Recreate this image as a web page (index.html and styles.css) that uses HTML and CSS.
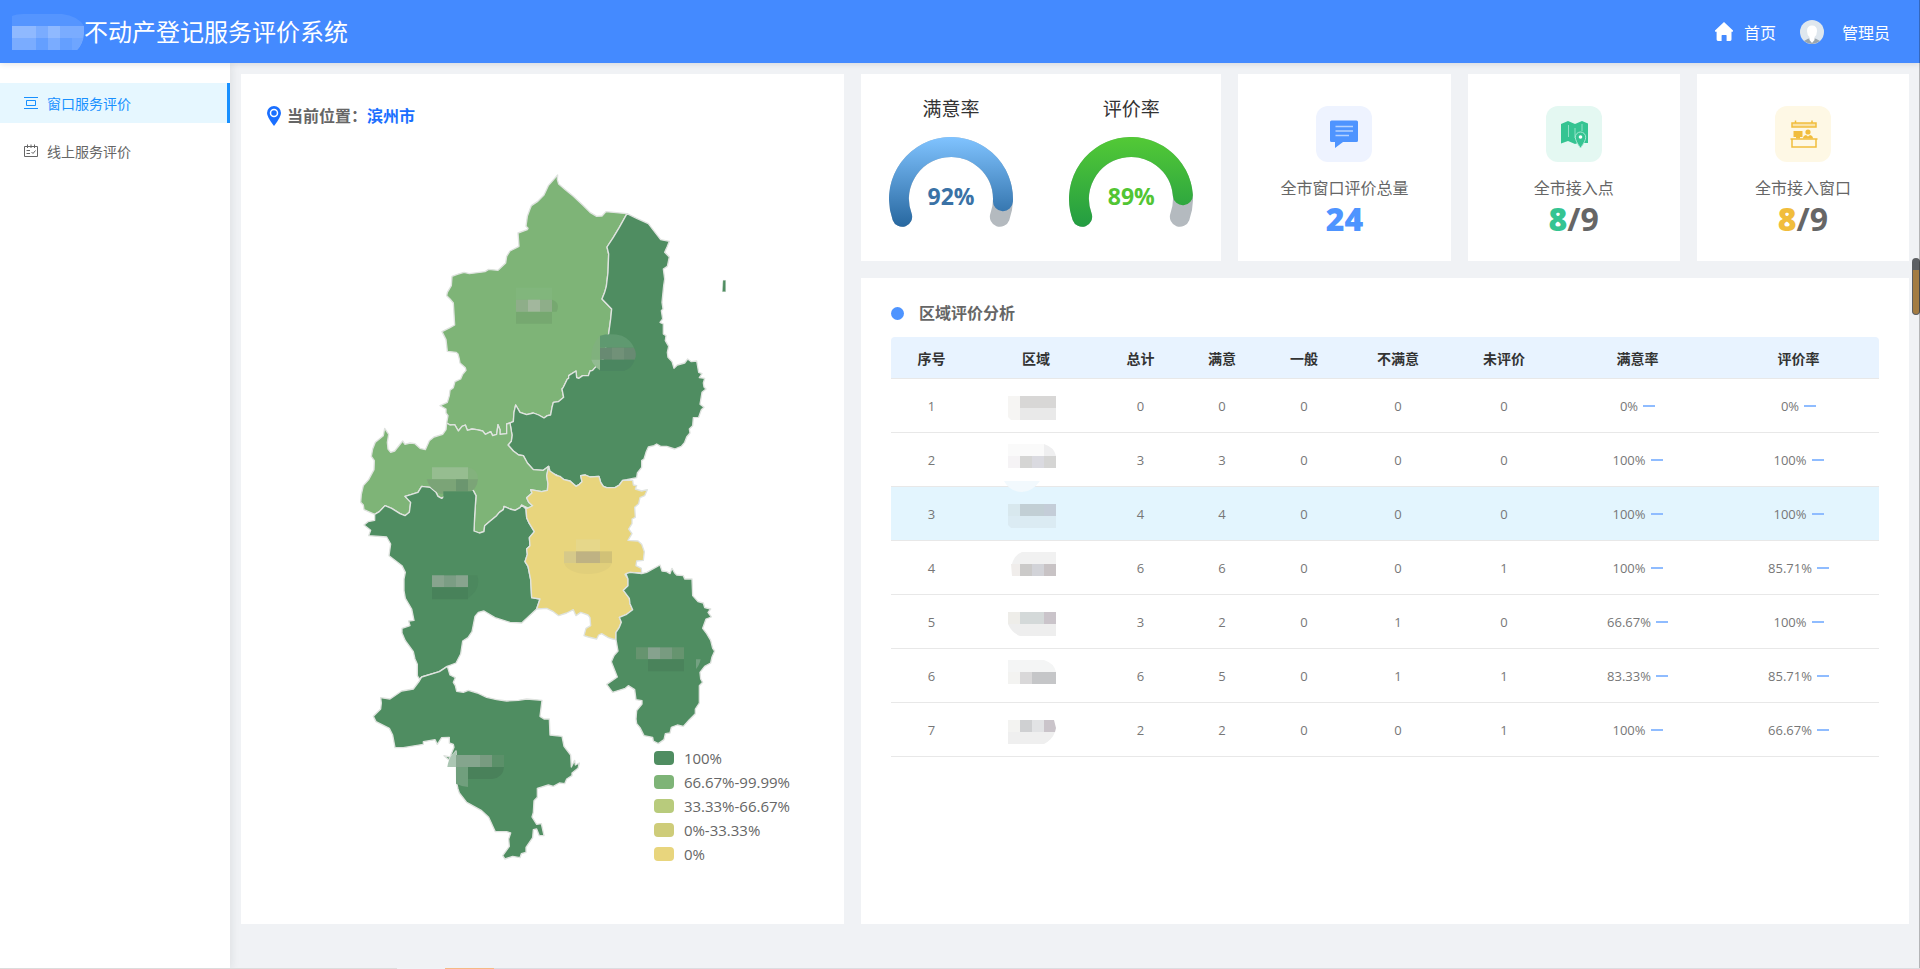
FILE: index.html
```html
<!DOCTYPE html>
<html lang="zh-CN">
<head>
	<meta charset="utf-8">
	<title>不动产登记服务评价系统</title>
	<link rel="stylesheet" href="styles.css">
</head>
<body>
	<header class="header">
		<div class="brand">
			<svg class="brand-mask" width="72" height="36" viewBox="0 0 72 36">
				<path d="M0 2Q4 0 12 0H50Q66 2 72 12H0Z" fill="#5595ff"/>
				<path d="M0 12H72V20Q71 30 65 36H0Z" fill="#7aacff"/>
				<path d="M0 12H24V24H0ZM36 12H48V24H36Z" fill="#8fb9ff"/>
				<path d="M24 24H36V36H24ZM48 24H60V36H48Z" fill="#649fff"/>
				<path d="M60 24H71Q69 32 65 36H60Z" fill="#6ea5ff"/>
			</svg>
			<h1>不动产登记服务评价系统</h1>
		</div>
		<nav class="user">
			<a href="#" class="home">
				<svg width="18" height="19" viewBox="0 0 18 19"><path d="M9 0L18 8.4Q18.3 9.6 17 9.8H16.5V17.6Q16.5 19 15.2 19H11.6V13.6Q11.6 13 11 13H7.2Q6.6 13 6.6 13.6V19H3Q1.6 19 1.6 17.6V9.8H1Q-.3 9.6 0 8.4Z" fill="#fff"/></svg>
				首页
			</a>
			<a href="#" class="admin">
				<svg width="24" height="24" viewBox="0 0 24 24">
					<circle cx="12" cy="12" r="12" fill="#dfe7ee"/>
					<path d="M4 21Q8 18 12 18Q16 18 20 21Q16 24 12 24Q8 24 4 21Z" fill="#9aa5ad"/>
					<path d="M12 5.5Q17 5.500 17 11Q17 15 14.500 17V20L12 23L9.500 20V17Q7 15 7 11Q7 5.500 12 5.500Z" fill="#fff"/>
				</svg>
				管理员
			</a>
		</nav>
	</header>
	<div class="body">
		<aside class="side">
			<ul>
				<li class="active"><a href="#">
					<svg width="14" height="14" viewBox="0 0 14 14" fill="none" stroke="currentColor"><path d="M0 1.500H14M0 12.500H14M2.500 4.500H11.500V9.500H2.500Z"/></svg>
					窗口服务评价</a></li>
				<li><a href="#">
					<svg width="14" height="14" viewBox="0 0 14 14" fill="none" stroke="currentColor"><path d="M.5 2.500H13.500V12.500H.5ZM3.500 .5V4M7 .5V4M10.500 .5V4M2.500 6.500H6M2.500 9.500H6M7.500 8L9 9.500L11.500 6.500"/></svg>
					线上服务评价</a></li>
			</ul>
		</aside>
		<main class="main">
			<section class="card map-card">
				<div class="place">
					<svg width="14" height="20" viewBox="0 0 14 20"><path d="M7 0A7 7 0 0 1 14 7Q14 11 7 20Q0 11 0 7A7 7 0 0 1 7 0Z" fill="#1a6fff"/><circle cx="7" cy="7" r="3.500" fill="none" stroke="#fff" stroke-width="1.500"/></svg>
					<span>当前位置：</span>
					<a href="#">滨州市</a>
				</div>
				<svg class="map" viewBox="9 0 1200 2130">
					<g stroke="#dfe3df" stroke-width="4" stroke-linejoin="round">
						<path fill="#7eb477" d="M653 48L652 62L656 75L676 92L700 112L728 138L750 160L770 172L786 171L798 158L861 164L838 205L820 235L801 264L806 285L804 340L799 382L794 400L786 420L815 450L812 480L806 524L790 600L765 626L758 634L750 636L745 650L728 650L716 658L710 656L708 636L696 644L686 650L686 658L682 660L670 685L666 690L671 715L655 728L640 730L636 745L632 768L622 770L612 777L596 768L580 762L560 767L540 760L527 738L522 760L520 788L500 795L500 824L480 826L480 812L474 797L470 826L458 830L452 818L436 826L428 816L410 812L396 810L382 814L376 798L366 802L355 816L344 797L330 798L320 792L324 770L318 762L318 750L300 740L322 730L328 710L330 694L340 686L345 668L362 660L368 646L378 634L376 626L360 612L358 600L354 585L348 580L322 577L318 542L306 518L330 506L344 498L340 432L330 420L320 410L322 400L334 380L336 352L352 346L372 340L388 344L435 338L446 331L474 334L497 312L500 292L510 276L537 262L534 222L562 212L564 208L558 202L562 172L570 150L574 140L592 128L612 108L625 80Z"/>
						<path fill="#4f8d61" d="M861 164L890 178L925 194L962 242L988 247L982 262L974 280L988 294L982 322L970 330L974 360L971 380L966 430L969 450L964 455L968 480L960 490L970 495L970 525L978 530L976 545L986 562L982 580L984 595L996 608L1002 628L1012 618L1034 612L1043 600L1054 608L1070 606L1076 640L1086 644L1078 656L1094 658L1090 672L1092 684L1098 690L1086 700L1080 736L1092 745L1084 752L1076 775L1060 776L1058 800L1048 810L1050 822L1040 834L1034 850L1024 862L1004 870L980 862L962 862L950 855L942 860L925 864L918 880L912 900L905 905L905 925L892 942L890 956L860 962L848 964L838 978L825 986L800 986L790 982L782 970L777 952L750 954L736 948L722 950L726 968L718 976L708 982L690 966L672 962L650 948L626 942L626 922L610 934L580 932L562 912L550 890L536 888L520 876L504 858L514 846L516 828L510 792L520 788L522 760L527 738L540 760L560 767L580 762L596 768L612 777L622 770L632 768L636 745L640 730L655 728L671 715L666 690L670 685L682 660L686 658L686 650L708 636L710 656L716 658L728 650L745 650L750 636L758 634L765 626L790 600L806 524L812 480L815 450L786 420L794 400L799 382L804 340L806 285L801 264L820 235L838 205Z"/>
						<path fill="#7eb477" d="M134 808L146 826L142 850L144 870L152 880L164 876L188 846L195 856L210 852L225 854L240 868L256 872L268 845L282 834L308 826L318 812L320 792L330 798L344 797L355 816L366 802L376 798L382 814L396 810L410 812L428 816L436 826L452 818L458 830L470 826L474 797L480 812L480 826L500 824L500 795L510 792L516 828L514 846L504 858L520 876L536 888L550 890L562 912L580 932L610 934L626 922L620 950L624 975L622 994L605 998L572 992L576 1002L560 1016L566 1030L578 1040L566 1048L545 1038L540 1046L525 1054L510 1050L492 1042L490 1052L478 1060L470 1070L448 1088L434 1100L432 1118L418 1122L402 1116L404 1070L408 1010L400 995L390 990L330 1002L305 1018L294 1012L288 1000L270 985L245 982L234 1000L215 1006L195 1012L212 1030L208 1060L195 1070L180 1064L155 1048L135 1040L118 1058L104 1066L72 1052L70 1038L62 1030L64 1006L70 980L86 962L102 932L103 905L94 892L98 870L106 850L130 830Z"/>
						<path fill="#4f8d61" d="M104 1066L118 1058L135 1040L155 1048L180 1064L195 1070L208 1060L212 1030L195 1012L215 1006L234 1000L245 982L270 985L288 1000L294 1012L305 1018L330 1002L390 990L400 995L408 1010L404 1070L402 1116L418 1122L432 1118L434 1100L448 1088L470 1070L478 1060L490 1052L492 1042L510 1050L525 1054L540 1046L545 1038L558 1050L560 1076L566 1090L583 1118L568 1136L570 1160L560 1170L562 1186L555 1208L564 1222L572 1262L575 1316L600 1320L590 1350L545 1392L510 1390L465 1376L432 1356L415 1360L405 1372L396 1418L384 1436L368 1446L362 1485L348 1512L322 1522L298 1538L245 1554L238 1560L232 1550L232 1516L225 1500L220 1478L196 1445L186 1422L186 1408L210 1400L206 1386L222 1384L215 1350L196 1318L192 1295L192 1260L196 1240L186 1220L147 1190L152 1155L140 1134L86 1130L92 1114L72 1098L84 1088L104 1084Z"/>
						<path fill="#e8d57d" d="M626 922L630 936L650 950L660 952L672 962L690 966L708 982L718 976L726 968L722 950L736 948L750 954L777 952L782 970L790 982L800 986L825 986L838 978L848 964L878 964L880 978L890 980L886 990L905 996L922 992L914 1010L900 1016L896 1034L884 1045L886 1075L876 1080L876 1094L866 1110L876 1124L864 1144L894 1146L905 1156L913 1178L910 1204L890 1206L888 1220L904 1228L905 1242L870 1240L855 1246L864 1260L864 1280L850 1294L868 1318L870 1334L878 1352L860 1366L838 1375L844 1390L838 1405L828 1420L828 1442L818 1440L805 1436L785 1424L776 1428L770 1440L745 1434L732 1430L738 1408L752 1400L750 1376L744 1368L722 1360L708 1370L700 1352L680 1362L656 1370L640 1358L620 1348L590 1350L600 1320L575 1316L572 1262L564 1222L555 1208L562 1186L560 1170L570 1160L568 1136L583 1118L566 1090L560 1076L558 1050L578 1040L566 1030L560 1016L576 1002L572 992L605 998L622 994L624 975L620 950Z"/>
						<path fill="#4f8d61" d="M905 1244L920 1240L960 1218L966 1236L980 1238L990 1244L996 1228L1004 1242L1010 1248L1030 1250L1034 1260L1056 1260L1058 1310L1074 1328L1090 1332L1094 1346L1112 1350L1104 1360L1114 1374L1098 1380L1088 1408L1100 1424L1112 1444L1118 1468L1124 1476L1116 1494L1112 1512L1094 1522L1080 1540L1082 1560L1088 1570L1078 1580L1078 1632L1066 1650L1066 1664L1048 1682L1030 1702L1012 1698L994 1705L990 1722L976 1724L972 1742L955 1754L940 1746L938 1735L912 1730L900 1706L890 1694L888 1680L890 1655L906 1635L906 1625L888 1622L884 1592L865 1580L856 1588L818 1600L800 1576L832 1554L814 1508L822 1490L834 1476L828 1442L828 1420L838 1405L844 1390L838 1375L860 1366L878 1352L870 1334L868 1318L850 1294L864 1280L864 1260L858 1244L870 1240Z"/>
						<path fill="#4f8d61" d="M322 1522L330 1548L346 1556L340 1570L346 1580L350 1597L370 1600L385 1594L412 1602L440 1615L470 1622L500 1626L535 1624L560 1620L606 1624L600 1672L612 1680L628 1680L630 1728L666 1732L672 1762L692 1788L694 1824L704 1804L706 1818L718 1812L714 1828L696 1842L696 1850L680 1860L674 1874L658 1872L640 1882L625 1878L592 1888L592 1915L582 1925L580 1960L576 1974L590 1996L604 1994L612 2030L598 2030L590 2010L580 2012L578 2036L558 2065L558 2080L544 2084L540 2096L518 2092L495 2100L488 2090L508 2062L506 2040L512 2022L500 2018L466 2018L446 1975L425 1955L380 1930L358 1902L354 1890L350 1872L348 1776L326 1802L312 1790L330 1794L342 1765L340 1756L328 1752L328 1735L305 1736L292 1756L285 1742L250 1748L250 1756L190 1766L165 1766L158 1728L148 1708L108 1688L100 1672L122 1650L124 1632L122 1616L150 1620L185 1596L220 1590L238 1566L245 1554L298 1538Z"/>
						<path fill="#4f8d61" d="M1149 364H1157V398H1147Z" stroke-width="1"/>
					</g>
					<!-- 各区县名称遮罩 -->
					<path fill="#81b67c" d="M528 386H636V422H528Z"/>
					<path fill="#76a870" d="M528 458H636V494H528ZM636 422Q662 430 650 458H636Z"/>
					<path fill="#8eae89" d="M528 422H564V458H528ZM600 422H636V458H600Z"/>
					<path fill="#a2b79d" d="M564 422H600V458H564Z"/>
					<path fill="#80b17d" d="M780 530V602H754Q750 560 780 530Z"/>
					<path fill="#92bb92" d="M754 602H780V634Q760 620 754 602Z"/>
					<path fill="#5f9970" d="M780 530Q810 522 846 530Q872 542 882 566H780Z"/>
					<path fill="#688a72" d="M780 566H882Q892 584 884 602H780Z"/>
					<path fill="#719178" d="M816 566H852V602H816Z"/>
					<path fill="#4b8660" d="M780 602H884Q878 626 852 636H780Z"/>
					<path fill="#96bd90" d="M276 925H384V961H276Z"/>
					<path fill="#83b27d" d="M384 925Q414 930 414 961H384Z"/>
					<path fill="#7ba477" d="M260 961H414Q412 990 384 1004H300Q268 990 260 961Z"/>
					<path fill="#6b966f" d="M348 961H384V997H348Z"/>
					<path fill="#4f8d61" d="M310 997H398V1020H310Z"/>
					<path fill="#88a48e" d="M276 1249H312V1285H276ZM348 1249H384V1285H348Z"/>
					<path fill="#7b9d84" d="M312 1249H348V1285H312Z"/>
					<path fill="#48825a" d="M276 1285H384V1321H276Z"/>
					<path fill="#4c885e" d="M384 1249H412Q424 1290 384 1318Z"/>
					<path fill="#e6d78a" d="M708 1141H780V1177H708Z"/>
					<path fill="#d6c989" d="M672 1177H708V1213H672Z"/>
					<path fill="#bfb283" d="M708 1177H780V1213H708Z"/>
					<path fill="#d1c177" d="M780 1177H816V1213H780Z"/>
					<path fill="#e1cf7b" d="M672 1213H816Q802 1244 744 1245Q686 1244 672 1213Z"/>
					<path fill="#66946f" d="M888 1465H924V1501H888ZM996 1465H1032V1501H996Z"/>
					<path fill="#86a28e" d="M924 1465H960V1501H924Z"/>
					<path fill="#789b80" d="M960 1465H996V1501H960Z"/>
					<path fill="#4a835b" d="M924 1501H1032V1537H924Z"/>
					<path fill="#73a181" d="M1068 1501H1082Q1078 1520 1068 1530Z"/>
					<path fill="#abc6b3" d="M348 1776V1824H322Q326 1792 348 1776Z"/>
					<path fill="#84a58d" d="M348 1788H420V1824H348Z"/>
					<path fill="#789b80" d="M420 1788H456V1824H420Z"/>
					<path fill="#5b9069" d="M456 1788H492V1824H456Z"/>
					<path fill="#709f7d" d="M348 1824H384V1884Q364 1882 348 1874Z"/>
					<path fill="#49815a" d="M384 1824H492Q490 1856 456 1860H384Z"/>
				</svg>
				<ul class="legend">
					<li><i class="lv1"></i>100%</li>
					<li><i class="lv2"></i>66.67%-99.99%</li>
					<li><i class="lv3"></i>33.33%-66.67%</li>
					<li><i class="lv4"></i>0%-33.33%</li>
					<li><i class="lv5"></i>0%</li>
				</ul>
			</section>
			<div class="right">
				<div class="stats">
					<section class="card gauges">
						<div class="gauge blue">
							<h3>满意率</h3>
							<svg width="124" height="90" viewBox="0 0 124 90" fill="none" stroke-width="20" stroke-linecap="round">
								<defs><linearGradient id="gBlue" gradientUnits="userSpaceOnUse" x1="0" y1="0" x2="0" y2="90"><stop offset="0" stop-color="#80c3ff"/><stop offset="1" stop-color="#27679f"/></linearGradient></defs>
								<path d="M13.140 79.790A52 52 0 1 1 110.860 79.790" stroke="#b4babf"/>
								<path d="M13.140 79.790A52 52 0 1 1 113.950 64.180" stroke="url(#gBlue)"/>
							</svg>
							<strong>92%</strong>
						</div>
						<div class="gauge green">
							<h3>评价率</h3>
							<svg width="124" height="90" viewBox="0 0 124 90" fill="none" stroke-width="20" stroke-linecap="round">
								<defs><linearGradient id="gGreen" gradientUnits="userSpaceOnUse" x1="0" y1="0" x2="0" y2="90"><stop offset="0" stop-color="#53c936"/><stop offset="1" stop-color="#239c42"/></linearGradient></defs>
								<path d="M13.140 79.790A52 52 0 1 1 110.860 79.790" stroke="#b4babf"/>
								<path d="M13.140 79.790A52 52 0 1 1 113.860 58.190" stroke="url(#gGreen)"/>
							</svg>
							<strong>89%</strong>
						</div>
					</section>
					<section class="card stat">
						<svg width="56" height="56" viewBox="0 0 56 56">
							<rect width="56" height="56" rx="12" fill="#eef3ff"/>
							<path d="M15.500 14.500H40.500Q42 14.500 42 16V34.500Q42 36 40.500 36H27L19 42V36H15.500Q14 36 14 34.500V16Q14 14.500 15.500 14.500Z" fill="#4e94ff"/>
							<path d="M19.500 20.500H37M19.500 25H37M19.500 29.500H33" stroke="#b5d2ff" stroke-width="1.500"/>
						</svg>
						<p>全市窗口评价总量</p>
						<strong><b class="c-blue">24</b></strong>
					</section>
					<section class="card stat">
						<svg width="56" height="56" viewBox="0 0 56 56">
							<rect width="56" height="56" rx="12" fill="#e4f8f2"/>
							<path d="M15 18L22 15L29 18L36 15L42 17.500V37H38L35 36L29 38L22 35L15 37.500Z" fill="#35c492"/>
							<path d="M22.500 19V31M29 22V32M36 18V25" stroke="#8fe0c5"/>
							<path d="M34.500 26A5.200 5.200 0 0 1 39.700 31.200Q39.700 35 34.500 42Q29.300 35 29.300 31.200A5.200 5.200 0 0 1 34.500 26Z" fill="#35c492" stroke="#a9e8d3"/>
							<circle cx="34.500" cy="31" r="1.800" fill="#fff"/>
						</svg>
						<p>全市接入点</p>
						<strong><b class="c-green">8</b>/9</strong>
					</section>
					<section class="card stat">
						<svg width="56" height="56" viewBox="0 0 56 56">
							<rect width="56" height="56" rx="12" fill="#fef8e5"/>
							<path d="M17 17H41V21H17Z" fill="#f9e2a6"/>
							<g fill="none" stroke="#f1bd3c" stroke-width="1.500">
								<path d="M17 17H41V21H17ZM20.500 14.500V17M37 14.500V17M15.500 33H42.500M17 33V41H41V33"/>
							</g>
							<path d="M18.500 25H27.500V31H25V32.500H21V31H18.500ZM28 32.500Q28 29.500 31 29L33 30.500L35 29Q38 29.500 38 32.500Z" fill="#f1bd3c"/>
							<circle cx="33" cy="26" r="2.600" fill="#f1bd3c"/>
						</svg>
						<p>全市接入窗口</p>
						<strong><b class="c-yellow">8</b>/9</strong>
					</section>
				</div>
				<section class="card analysis">
					<h2>区域评价分析</h2>
					<table>
						<colgroup><col class="w81"><col class="w128"><col class="w81"><col class="w82"><col class="w82"><col class="w106"><col class="w106"><col class="w161"><col class="w161"></colgroup>
						<thead>
							<tr><th>序号</th><th>区域</th><th>总计</th><th>满意</th><th>一般</th><th>不满意</th><th>未评价</th><th>满意率</th><th>评价率</th></tr>
						</thead>
						<tbody>
							<tr><td>1</td><td class="area"><svg width="48" height="36"><path fill="#f6f5f3" d="M0 8H12V32H3L0 29Z"/><path fill="#d8d7d6" d="M12 8H48V20H12Z"/><path fill="#e9e9e9" d="M12 20H48V32H12Z"/></svg></td><td>0</td><td>0</td><td>0</td><td>0</td><td>0</td><td>0%<i></i></td><td>0%<i></i></td></tr>
							<tr><td>2</td><td class="area"><svg width="48" height="36"><path fill="#fafafa" d="M0 2H36V14H0Z"/><path fill="#efeff0" d="M36 2Q46 5 48 14H36Z"/><path fill="#f5f3f5" d="M0 14H12V26H0Z"/><path fill="#d5d5d4" d="M12 14H24V26H12ZM36 14H48V26H36Z"/><path fill="#dadae0" d="M24 14H36V26H24Z"/></svg></td><td>3</td><td>3</td><td>0</td><td>0</td><td>0</td><td>100%<i></i></td><td>100%<i></i></td></tr>
							<tr class="hover"><td>3</td><td class="area"><svg width="48" height="36"><path fill="#f2f9fd" d="M-4 -15H32Q24 -4 14 -4Q2 -4 -4 -15Z"/><path fill="#d8e8ee" d="M0 8H12V20H0Z"/><path fill="#c2cfd5" d="M12 8H36V20H12Z"/><path fill="#c4cdd8" d="M36 8H48V20H36Z"/><path fill="#dbebf3" d="M0 20H48V32H3L0 29Z"/></svg></td><td>4</td><td>4</td><td>0</td><td>0</td><td>0</td><td>100%<i></i></td><td>100%<i></i></td></tr>
							<tr><td>4</td><td class="area"><svg width="48" height="36"><path fill="#f1f1f1" d="M48 2V14H4Q6 5 14 2Z"/><path fill="#f0edeb" d="M3 14H12V26H4Z"/><path fill="#cbcac9" d="M12 14H24V26H12Z"/><path fill="#d2d3d8" d="M24 14H36V26H24Z"/><path fill="#c8c3c5" d="M36 14H48V26H36Z"/></svg></td><td>6</td><td>6</td><td>0</td><td>0</td><td>1</td><td>100%<i></i></td><td>85.71%<i></i></td></tr>
							<tr><td>5</td><td class="area"><svg width="48" height="36"><path fill="#eeede9" d="M0 8H12V20H0Z"/><path fill="#d4d9d9" d="M12 8H36V20H12Z"/><path fill="#cac4ca" d="M36 8H48V20H36Z"/><path fill="#eeeeee" d="M0 20H48V32H12Q4 29 0 20Z"/></svg></td><td>3</td><td>2</td><td>0</td><td>1</td><td>0</td><td>66.67%<i></i></td><td>100%<i></i></td></tr>
							<tr><td>6</td><td class="area"><svg width="48" height="36"><path fill="#f4f5f5" d="M0 2H36Q46 5 48 14H0Z"/><path fill="#f3f3f1" d="M0 14H12V26H0Z"/><path fill="#d9d8d9" d="M12 14H24V26H12Z"/><path fill="#c5c6c8" d="M24 14H48V26H24Z"/></svg></td><td>6</td><td>5</td><td>0</td><td>1</td><td>1</td><td>83.33%<i></i></td><td>85.71%<i></i></td></tr>
							<tr><td>7</td><td class="area"><svg width="48" height="36"><path fill="#f3f3f1" d="M0 8H12V20H0Z"/><path fill="#cfd0d2" d="M12 8H24V20H12Z"/><path fill="#e2e3e5" d="M24 8H36V20H24Z"/><path fill="#cac4ca" d="M36 8H46L48 16L47 20H36Z"/><path fill="#efefef" d="M0 20H47Q44 28 36 32H0Z"/></svg></td><td>2</td><td>2</td><td>0</td><td>0</td><td>1</td><td>100%<i></i></td><td>66.67%<i></i></td></tr>
						</tbody>
					</table>
				</section>
			</div>
		</main>
	</div>
	<div class="thumb"></div>
	<div class="edge"></div>
	<div class="foot-line"></div>
</body>
</html>
```
FILE: styles.css
```css
*{
	margin: 0;
	padding: 0;
	box-sizing: border-box;
}
body{
	font-family: "Open Sans", "Noto Sans CJK SC", sans-serif;
	font-size: 14px;
	color: #666;
	background-color: #f0f2f5;
	min-height: 100vh;
	display: flex;
	flex-direction: column;
}
a{
	text-decoration: none;
	color: inherit;
}
ul{
	list-style: none;
}
svg{
	display: block;
	flex-shrink: 0;
}

/* 顶部 */
.header{
	height: 63px;
	padding: 0 30px 0 12px;
	background-color: #448aff;
	color: #fff;
	display: flex;
	align-items: center;
	justify-content: space-between;
	box-shadow: 0 1px 6px rgba(0,21,41,0.12);
	position: relative;
	z-index: 2;
}
.brand, .user, .home, .admin{
	display: flex;
	align-items: center;
}
.brand h1{
	font-size: 24px;
	line-height: 36px;
	font-weight: 400;
}
.user{
	gap: 24px;
	font-size: 16px;
}
.home{
	gap: 11px;
}
.admin{
	gap: 18px;
}

/* 左侧菜单 */
.body{
	flex: 1;
	display: flex;
}
.side{
	width: 230px;
	flex-shrink: 0;
	padding-top: 20px;
	background-color: #fff;
	box-shadow: 2px 0 8px rgba(29,35,41,0.08);
}
.side li{
	height: 40px;
	margin-bottom: 8px;
	padding-left: 24px;
}
.side a{
	height: 40px;
	display: flex;
	align-items: center;
	gap: 9px;
}
.side .active{
	color: #1890ff;
	background-color: #e6f7ff;
	border-right: 3px solid #1890ff;
}

/* 内容区 */
.main{
	flex: 1;
	display: grid;
	grid-template-columns: 605fr 1046fr;
	gap: 17px;
	padding: 11px 11px 45px;
}
.card{
	background-color: #fff;
}
.map-card{
	position: relative;
	padding: 30px 26px 40px;
}
.place{
	display: flex;
	align-items: center;
	font-size: 16px;
	line-height: 24px;
	font-weight: 700;
}
.place svg{
	margin-right: 6px;
}
.place a{
	color: #1a6fff;
}
.map{
	width: 400px;
	margin: 31px auto 0;
}
.legend{
	position: absolute;
	right: 54px;
	bottom: 58px;
	font-size: 15px;
	line-height: 24px;
}
.legend li{
	display: flex;
	align-items: center;
	gap: 10px;
}
.legend i{
	width: 20px;
	height: 14px;
	border-radius: 4px;
}
.lv1{ background-color: #4f8d61; }
.lv2{ background-color: #7eb477; }
.lv3{ background-color: #b8cb7c; }
.lv4{ background-color: #cecc79; }
.lv5{ background-color: #e8d57d; }

.right{
	display: flex;
	flex-direction: column;
	gap: 17px;
}
.stats{
	display: grid;
	grid-template-columns: 360fr 212fr 212fr 212fr;
	gap: 17px;
}
.gauges{
	display: grid;
	grid-template-columns: 1fr 1fr;
	padding: 22px 0;
}
.gauge{
	position: relative;
	display: flex;
	flex-direction: column;
	align-items: center;
}
.gauge h3{
	font-size: 19px;
	line-height: 26px;
	font-weight: 400;
	color: #333;
	margin-bottom: 15px;
}
.gauge strong{
	position: absolute;
	top: 84px;
	font-size: 23px;
	line-height: 32px;
}
.blue strong{
	color: #3a72a6;
}
.green strong{
	color: #52c534;
}
.stat{
	display: flex;
	flex-direction: column;
	align-items: center;
	padding: 32px 0 23px;
}
.stat p{
	margin-top: 14px;
	font-size: 16px;
	line-height: 24px;
}
.stat strong{
	font-size: 32px;
	line-height: 38px;
}
.c-blue{ color: #4e94ff; }
.c-green{ color: #35c492; }
.c-yellow{ color: #f1bd3c; }

/* 区域评价分析 */
.analysis{
	flex: 1;
	padding: 23px 30px;
}
.analysis h2{
	display: flex;
	align-items: center;
	gap: 15px;
	font-size: 16px;
	line-height: 24px;
	font-weight: 700;
	margin-bottom: 12px;
}
.analysis h2::before{
	content: "";
	width: 13px;
	height: 13px;
	border-radius: 50%;
	background-color: #4e94ff;
}
table{
	width: 100%;
	table-layout: fixed;
	border-collapse: separate;
	border-spacing: 0;
	text-align: center;
}
.w81{ width: 81px; }
.w82{ width: 82px; }
.w106{ width: 106px; }
.w128{ width: 128px; }
.w161{ width: 161px; }
th{
	height: 42px;
	background-color: #e8f3ff;
	color: #333;
	font-weight: 700;
	border-bottom: 1px solid #e8e8e8;
}
th:first-child{
	border-top-left-radius: 4px;
}
th:last-child{
	border-top-right-radius: 4px;
}
td{
	height: 54px;
	font-size: 13px;
	color: #777;
	border-bottom: 1px solid #e8e8e8;
}
td i{
	display: inline-block;
	width: 12px;
	height: 2px;
	margin-left: 5px;
	vertical-align: 4px;
	background-color: #8fbcff;
}
.area{
	padding-right: 8px;
}
.area svg{
	margin: 0 auto;
	overflow: visible;
}
.hover td{
	background-color: #e3f5fe;
}

/* 右侧滚动条 */
.thumb{
	position: fixed;
	right: 0;
	top: 258px;
	width: 8px;
	height: 57px;
	border: 1px solid #5d6063;
	border-top-width: 12px;
	border-radius: 4px;
	background-color: #a37c42;
	z-index: 3;
}
.edge{
	position: fixed;
	right: 0;
	top: 0;
	bottom: 0;
	width: 1px;
	background-color: rgba(0,0,0,0.25);
	z-index: 3;
}
.foot-line{
	position: fixed;
	left: 0;
	right: 0;
	bottom: 0;
	height: 1px;
	background: linear-gradient(to right, #dcdcdc 397px, #f0f2f5 397px, #f0f2f5 445px, #f6b984 445px, #f6b984 494px, #dcdce0 494px);
	z-index: 3;
}
```
